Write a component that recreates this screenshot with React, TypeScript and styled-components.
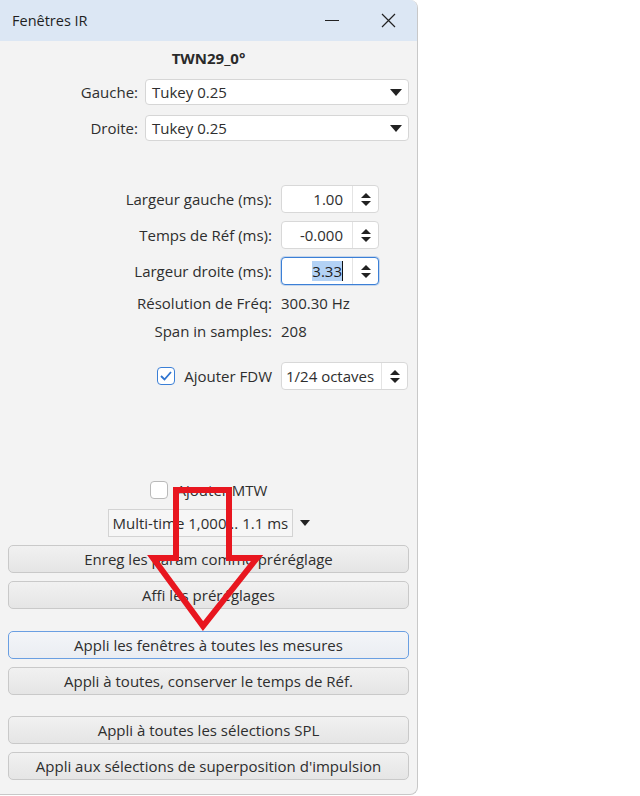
import React from 'react';
import styled, { createGlobalStyle } from 'styled-components';

const GlobalStyle = createGlobalStyle`
  html, body {
    margin: 0;
    padding: 0;
    background: #ffffff;
  }
  body {
    font-family: 'Open Sans', 'Noto Sans', sans-serif;
    font-size: 15px;
    color: #2e2e2e;
  }
`;

const Page = styled.div`
  width: 640px;
  height: 796px;
  background: #ffffff;
  overflow: hidden;
`;

const Window = styled.div`
  position: relative;
  width: 418px;
  height: 795px;
  box-sizing: border-box;
  background: #f3f3f3;
  border-right: 1px solid #c8c8c8;
  border-bottom: 1px solid #c8c8c8;
  border-top-right-radius: 8px;
  border-bottom-right-radius: 8px;
  overflow: hidden;
  display: flex;
  flex-direction: column;
`;

const TitleBar = styled.div`
  height: 41px;
  flex-shrink: 0;
  background: #dce7f4;
  display: flex;
  align-items: center;
  padding-left: 12px;
  font-size: 14.5px;
  color: #1f1f1f;
`;

const TitleText = styled.span`
  flex: 1;
`;

const WinButton = styled.span`
  width: 57px;
  height: 41px;
  display: flex;
  align-items: center;
  justify-content: center;
`;

const Content = styled.div`
  padding: 0 8px;
  display: flex;
  flex-direction: column;
`;

const Heading = styled.div`
  margin-top: 7px;
  height: 20px;
  line-height: 20px;
  text-align: center;
  font-weight: 700;
  font-size: 15px;
  color: #2a2a2a;
`;

const FormGrid = styled.div<{ $labelWidth: number; $gap: number; $rowGap: number; $top: number }>`
  display: grid;
  grid-template-columns: ${(p) => p.$labelWidth}px 1fr;
  column-gap: ${(p) => p.$gap}px;
  row-gap: ${(p) => p.$rowGap}px;
  margin-top: ${(p) => p.$top}px;
  align-items: center;
`;

const Label = styled.div`
  text-align: right;
  white-space: nowrap;
  line-height: 20px;
`;

const Value = styled.div`
  line-height: 20px;
  white-space: nowrap;
`;

const Combo = styled.div`
  height: 26px;
  box-sizing: border-box;
  background: #ffffff;
  border: 1px solid #d6d6d6;
  border-radius: 4px;
  display: flex;
  align-items: center;
  padding: 0 6px 0 6px;
`;

const ComboText = styled.span`
  flex: 1;
`;

const SpinBox = styled.div<{ $width: number; $focused?: boolean }>`
  width: ${(p) => p.$width}px;
  height: 28px;
  box-sizing: border-box;
  background: #ffffff;
  border: 1px solid ${(p) => (p.$focused ? '#3b7fd6' : '#d8d8d8')};
  box-shadow: ${(p) => (p.$focused ? '0 0 0 1px rgba(59, 127, 214, 0.25)' : 'none')};
  border-radius: 4px;
  display: flex;
  overflow: hidden;
`;

const SpinField = styled.div<{ $align: 'left' | 'right' }>`
  flex: 1;
  display: flex;
  align-items: center;
  justify-content: ${(p) => (p.$align === 'right' ? 'flex-end' : 'flex-start')};
  padding: ${(p) => (p.$align === 'right' ? '0 9px 0 0' : '0 0 0 4px')};
  white-space: nowrap;
  overflow: hidden;
`;

const Selected = styled.span`
  background: #b3d2f5;
  color: #1d1d1d;
`;

const Caret = styled.span`
  display: inline-block;
  width: 1px;
  height: 20px;
  background: #111;
  vertical-align: middle;
`;

const SpinArrows = styled.div`
  width: 25px;
  flex-shrink: 0;
  border-left: 1px solid #e4e4e4;
  display: flex;
  align-items: center;
  justify-content: center;
`;

const CheckRow = styled.div`
  display: flex;
  align-items: center;
  justify-content: flex-end;
  gap: 9px;
`;

const Box = styled.span<{ $checked?: boolean }>`
  width: 18px;
  height: 18px;
  flex-shrink: 0;
  box-sizing: border-box;
  border-radius: 4px;
  background: #ffffff;
  border: 1px solid ${(p) => (p.$checked ? '#3b7fd6' : '#b9b9b9')};
  display: flex;
  align-items: center;
  justify-content: center;
`;

const CenterRow = styled.div<{ $top: number }>`
  display: flex;
  justify-content: center;
  align-items: center;
  margin-top: ${(p) => p.$top}px;
`;

const MtwRow = styled(CenterRow)`
  height: 20px;
  gap: 9px;
`;

const MultiBox = styled.div`
  width: 185px;
  height: 28px;
  box-sizing: border-box;
  border: 1px solid #d3d3d3;
  background: #f6f6f6;
  display: flex;
  align-items: center;
  padding-left: 4px;
  overflow: hidden;
  white-space: nowrap;
`;

const MultiArrow = styled.span`
  margin-left: 7px;
  display: flex;
`;

const ButtonGroup = styled.div<{ $top: number }>`
  display: flex;
  flex-direction: column;
  gap: 8px;
  margin-top: ${(p) => p.$top}px;
`;

const Button = styled.div<{ $focused?: boolean }>`
  height: 28px;
  box-sizing: border-box;
  border: 1px solid ${(p) => (p.$focused ? '#6a9fe2' : '#c9c9c9')};
  border-radius: 5px;
  background: ${(p) =>
    p.$focused ? 'linear-gradient(#f3f5f8, #eaedf2)' : 'linear-gradient(#f1f1f1, #e5e5e5)'};
  display: flex;
  align-items: center;
  justify-content: center;
  color: #2e2e2e;
  white-space: nowrap;
`;

const Overlay = styled.svg`
  position: absolute;
  left: 0;
  top: 0;
  pointer-events: none;
`;

const DownTriangle: React.FC<{ w?: number; h?: number }> = ({ w = 12, h = 7 }) => (
  <svg width={w} height={h} viewBox={`0 0 ${w} ${h}`}>
    <polygon points={`0,0 ${w},0 ${w / 2},${h}`} fill="#222" />
  </svg>
);

const UpDown = () => (
  <svg width="10" height="15" viewBox="0 0 10 15">
    <polygon points="0,6 5,1 10,6" fill="#222" />
    <polygon points="0,9 10,9 5,14" fill="#222" />
  </svg>
);

const Check = () => (
  <svg width="12" height="10" viewBox="0 0 12 10">
    <polyline points="1,5 4.5,8.5 11,1" fill="none" stroke="#2f74d0" strokeWidth="1.8" />
  </svg>
);

const Spinner: React.FC<{ value: string; focused?: boolean }> = ({ value, focused }) => (
  <SpinBox $width={98} $focused={focused}>
    <SpinField $align="right">
      {focused ? (
        <>
          <Selected>{value}</Selected>
          <Caret />
        </>
      ) : (
        value
      )}
    </SpinField>
    <SpinArrows>
      <UpDown />
    </SpinArrows>
  </SpinBox>
);

const App: React.FC = () => {
  return (
    <Page>
      <GlobalStyle />
      <Window>
        <TitleBar>
          <TitleText>Fenêtres IR</TitleText>
          <WinButton>
            <svg width="14" height="2" viewBox="0 0 14 2">
              <rect x="0" y="0" width="14" height="1" fill="#222" />
            </svg>
          </WinButton>
          <WinButton>
            <svg width="15" height="15" viewBox="0 0 15 15">
              <path d="M1 1 L14 14 M14 1 L1 14" stroke="#222" strokeWidth="1.2" />
            </svg>
          </WinButton>
        </TitleBar>
        <Content>
          <Heading>TWN29_0°</Heading>

          <FormGrid $labelWidth={130} $gap={7} $rowGap={10} $top={11}>
            <Label>Gauche:</Label>
            <Combo>
              <ComboText>Tukey 0.25</ComboText>
              <DownTriangle />
            </Combo>
            <Label>Droite:</Label>
            <Combo>
              <ComboText>Tukey 0.25</ComboText>
              <DownTriangle />
            </Combo>
          </FormGrid>

          <FormGrid $labelWidth={264} $gap={9} $rowGap={8} $top={44}>
            <Label>Largeur gauche (ms):</Label>
            <Spinner value="1.00" />
            <Label>Temps de Réf (ms):</Label>
            <Spinner value="-0.000" />
            <Label>Largeur droite (ms):</Label>
            <Spinner value="3.33" focused />
            <Label>Résolution de Fréq:</Label>
            <Value>300.30 Hz</Value>
            <Label>Span in samples:</Label>
            <Value>208</Value>
          </FormGrid>

          <FormGrid $labelWidth={264} $gap={9} $rowGap={8} $top={21}>
            <CheckRow>
              <Box $checked>
                <Check />
              </Box>
              <span>Ajouter FDW</span>
            </CheckRow>
            <SpinBox $width={127}>
              <SpinField $align="left">1/24 octaves</SpinField>
              <SpinArrows>
                <UpDown />
              </SpinArrows>
            </SpinBox>
          </FormGrid>

          <MtwRow $top={90}>
            <Box />
            <span>Ajouter MTW</span>
          </MtwRow>

          <CenterRow $top={9}>
            <MultiBox>Multi-time 1,000 .. 1.1 ms</MultiBox>
            <MultiArrow>
              <DownTriangle w={10} h={6} />
            </MultiArrow>
          </CenterRow>

          <ButtonGroup $top={8}>
            <Button>Enreg les param comme préréglage</Button>
            <Button>Affi les préréglages</Button>
          </ButtonGroup>

          <ButtonGroup $top={22}>
            <Button $focused>Appli les fenêtres à toutes les mesures</Button>
            <Button>Appli à toutes, conserver le temps de Réf.</Button>
          </ButtonGroup>

          <ButtonGroup $top={21}>
            <Button>Appli à toutes les sélections SPL</Button>
            <Button>Appli aux sélections de superposition d'impulsion</Button>
          </ButtonGroup>
        </Content>

        <Overlay width="418" height="795" viewBox="0 0 418 795">
          <polygon
            points="176,490 229,490 229,558 257,558 203,626 153,558 176,558"
            fill="none"
            stroke="#e8161f"
            strokeWidth="6"
            strokeLinejoin="miter"
            strokeMiterlimit="10"
          />
        </Overlay>
      </Window>
    </Page>
  );
};

export default App;
